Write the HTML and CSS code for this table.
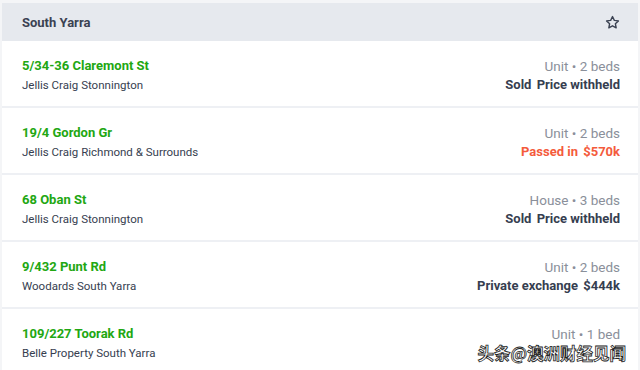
FILE: index.html
```html
<!DOCTYPE html>
<html>
<head>
<meta charset="utf-8">
<link rel="stylesheet" href="styles.css">
</head>
<body>
<div class="card">
  <div class="head">
    <span class="suburb">South Yarra</span>
    <svg class="star" width="14" height="14" viewBox="0 0 24 24" fill="none" stroke="#3b4252" stroke-width="2.2" stroke-linejoin="round"><path d="M12 2.5l2.9 6.1 6.6.8-4.9 4.6 1.3 6.6L12 17.3l-5.9 3.3 1.3-6.6-4.9-4.6 6.6-.8z"/></svg>
  </div>
  <div class="row">
    <div class="left"><div class="addr">5/34-36 Claremont St</div><div class="agency">Jellis Craig Stonnington</div></div>
    <div class="right"><div class="type">Unit • 2 beds</div><div class="price">Sold <span class="val">Price withheld</span></div></div>
  </div>
  <div class="row">
    <div class="left"><div class="addr">19/4 Gordon Gr</div><div class="agency">Jellis Craig Richmond &amp; Surrounds</div></div>
    <div class="right"><div class="type">Unit • 2 beds</div><div class="price red">Passed in <span class="val">$570k</span></div></div>
  </div>
  <div class="row">
    <div class="left"><div class="addr">68 Oban St</div><div class="agency">Jellis Craig Stonnington</div></div>
    <div class="right"><div class="type">House • 3 beds</div><div class="price">Sold <span class="val">Price withheld</span></div></div>
  </div>
  <div class="row">
    <div class="left"><div class="addr">9/432 Punt Rd</div><div class="agency">Woodards South Yarra</div></div>
    <div class="right"><div class="type">Unit • 2 beds</div><div class="price">Private exchange <span class="val">$444k</span></div></div>
  </div>
  <div class="row last">
    <div class="left"><div class="addr">109/227 Toorak Rd</div><div class="agency">Belle Property South Yarra</div></div>
    <div class="right"><div class="type">Unit • 1 bed</div><div class="price"></div></div>
  </div>
  <div class="watermark">头条@澳洲财经见闻</div>
</div>
</body>
</html>
```
FILE: styles.css
```css
html, body { margin: 0; padding: 0; }
body {
  background: #f4f5f7;
  font-family: Roboto, "Noto Sans", sans-serif;
  width: 640px;
  height: 370px;
  overflow: hidden;
}
.card {
  position: relative;
  margin: 3px 2px 0 2px;
  background: #fff;
  height: 367px;
}
.head {
  height: 38px;
  background: #e6e9ee;
  display: flex;
  align-items: center;
  justify-content: space-between;
  padding: 0 18px 0 20px;
}
.suburb {
  font-size: 13px;
  font-weight: 700;
  color: #3b4252;
}
.star { margin-top: 1px; width: 15px; height: 15px; }
.row {
  height: 65px;
  border-bottom: 2px solid #eef0f4;
  display: flex;
  justify-content: space-between;
  padding: 0 18px 0 20px;
}
.row.last { border-bottom: none; }
.left, .right {
  display: flex;
  flex-direction: column;
  padding-top: 17px;
}
.right { align-items: flex-end; }
.addr {
  font-size: 13px;
  font-weight: 700;
  color: #22a712;
  line-height: 16px;
}
.agency {
  font-size: 11.5px;
  color: #363e50;
  line-height: 14px;
  margin-top: 4px;
}
.type {
  font-size: 13.5px;
  color: #8a8f9a;
  line-height: 16px;
}
.price {
  font-size: 13px;
  font-weight: 700;
  color: #363e50;
  line-height: 16px;
  margin-top: 3px;
}
.price .val { margin-left: 2px; }
.price.red { color: #f45b3c; }
.watermark {
  position: absolute;
  right: 12px;
  bottom: 8px;
  font-family: "Noto Sans CJK SC", sans-serif;
  font-size: 16.5px;
  line-height: 18px;
  font-weight: 700;
  color: #fff;
  -webkit-text-stroke: 0.8px #222;
}
```
